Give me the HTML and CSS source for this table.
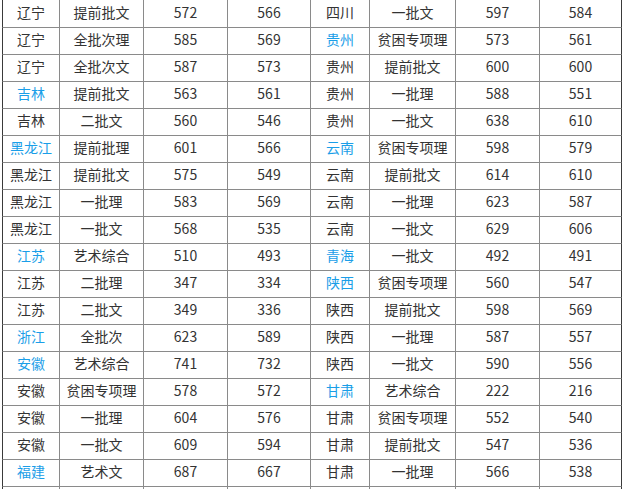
FILE: index.html
```html
<!DOCTYPE html>
<html lang="zh">
<head>
<meta charset="utf-8">
<link rel="stylesheet" href="styles.css">
</head>
<body>
<div class="wrap">
<table class="score">
<colgroup>
<col class="c1"><col class="c2"><col class="c3"><col class="c4"><col class="c5"><col class="c6"><col class="c7"><col class="c8">
</colgroup>
<tbody>
<tr><td>辽宁</td><td>提前批文</td><td>572</td><td>566</td><td>四川</td><td>一批文</td><td>597</td><td>584</td></tr>
<tr><td>辽宁</td><td>全批次理</td><td>585</td><td>569</td><td class="link">贵州</td><td>贫困专项理</td><td>573</td><td>561</td></tr>
<tr><td>辽宁</td><td>全批次文</td><td>587</td><td>573</td><td>贵州</td><td>提前批文</td><td>600</td><td>600</td></tr>
<tr><td class="link">吉林</td><td>提前批文</td><td>563</td><td>561</td><td>贵州</td><td>一批理</td><td>588</td><td>551</td></tr>
<tr><td>吉林</td><td>二批文</td><td>560</td><td>546</td><td>贵州</td><td>一批文</td><td>638</td><td>610</td></tr>
<tr><td class="link">黑龙江</td><td>提前批理</td><td>601</td><td>566</td><td class="link">云南</td><td>贫困专项理</td><td>598</td><td>579</td></tr>
<tr><td>黑龙江</td><td>提前批文</td><td>575</td><td>549</td><td>云南</td><td>提前批文</td><td>614</td><td>610</td></tr>
<tr><td>黑龙江</td><td>一批理</td><td>583</td><td>569</td><td>云南</td><td>一批理</td><td>623</td><td>587</td></tr>
<tr><td>黑龙江</td><td>一批文</td><td>568</td><td>535</td><td>云南</td><td>一批文</td><td>629</td><td>606</td></tr>
<tr><td class="link">江苏</td><td>艺术综合</td><td>510</td><td>493</td><td class="link">青海</td><td>一批文</td><td>492</td><td>491</td></tr>
<tr><td>江苏</td><td>二批理</td><td>347</td><td>334</td><td class="link">陕西</td><td>贫困专项理</td><td>560</td><td>547</td></tr>
<tr><td>江苏</td><td>二批文</td><td>349</td><td>336</td><td>陕西</td><td>提前批文</td><td>598</td><td>569</td></tr>
<tr><td class="link">浙江</td><td>全批次</td><td>623</td><td>589</td><td>陕西</td><td>一批理</td><td>587</td><td>557</td></tr>
<tr><td class="link">安徽</td><td>艺术综合</td><td>741</td><td>732</td><td>陕西</td><td>一批文</td><td>590</td><td>556</td></tr>
<tr><td>安徽</td><td>贫困专项理</td><td>578</td><td>572</td><td class="link">甘肃</td><td>艺术综合</td><td>222</td><td>216</td></tr>
<tr><td>安徽</td><td>一批理</td><td>604</td><td>576</td><td>甘肃</td><td>贫困专项理</td><td>552</td><td>540</td></tr>
<tr><td>安徽</td><td>一批文</td><td>609</td><td>594</td><td>甘肃</td><td>提前批文</td><td>547</td><td>536</td></tr>
<tr><td class="link">福建</td><td>艺术文</td><td>687</td><td>667</td><td>甘肃</td><td>一批理</td><td>566</td><td>538</td></tr>
<tr class="tail"><td></td><td></td><td></td><td></td><td></td><td></td><td></td><td></td></tr>
</tbody>
</table>
</div>
</body>
</html>
```
FILE: styles.css
```css
html, body {
  margin: 0;
  padding: 0;
  background: #ffffff;
  overflow: hidden;
}
.wrap {
  padding-left: 2px;
  width: 620px;
}
.score {
  border-collapse: separate;
  border-spacing: 0;
  table-layout: fixed;
  width: 620px;
  font-family: "Microsoft YaHei", "Noto Sans CJK SC", "Noto Sans", sans-serif;
  font-size: 14px;
  color: #333333;
}
.c1 { width: 58px; }
.c2 { width: 84px; }
.c3 { width: 84px; }
.c4 { width: 83px; }
.c5 { width: 59px; }
.c6 { width: 86px; }
.c7 { width: 84px; }
.c8 { width: 82px; }
.score td {
  box-sizing: border-box;
  height: 27px;
  padding: 0 0 4px 0;
  text-align: center;
  vertical-align: middle;
  line-height: 20px;
  white-space: nowrap;
  border: 0 solid #8a8a8a;
  border-right-width: 1px;
  border-bottom-width: 1px;
}
.score tr:first-child td {
  height: 28px;
}
.score td:first-child {
  border-left-width: 1px;
  border-left-color: #3a3a3a;
}
.score td:last-child {
  border-right-color: #3a3a3a;
}
.score td.link {
  color: #1a9ee8;
}
```
